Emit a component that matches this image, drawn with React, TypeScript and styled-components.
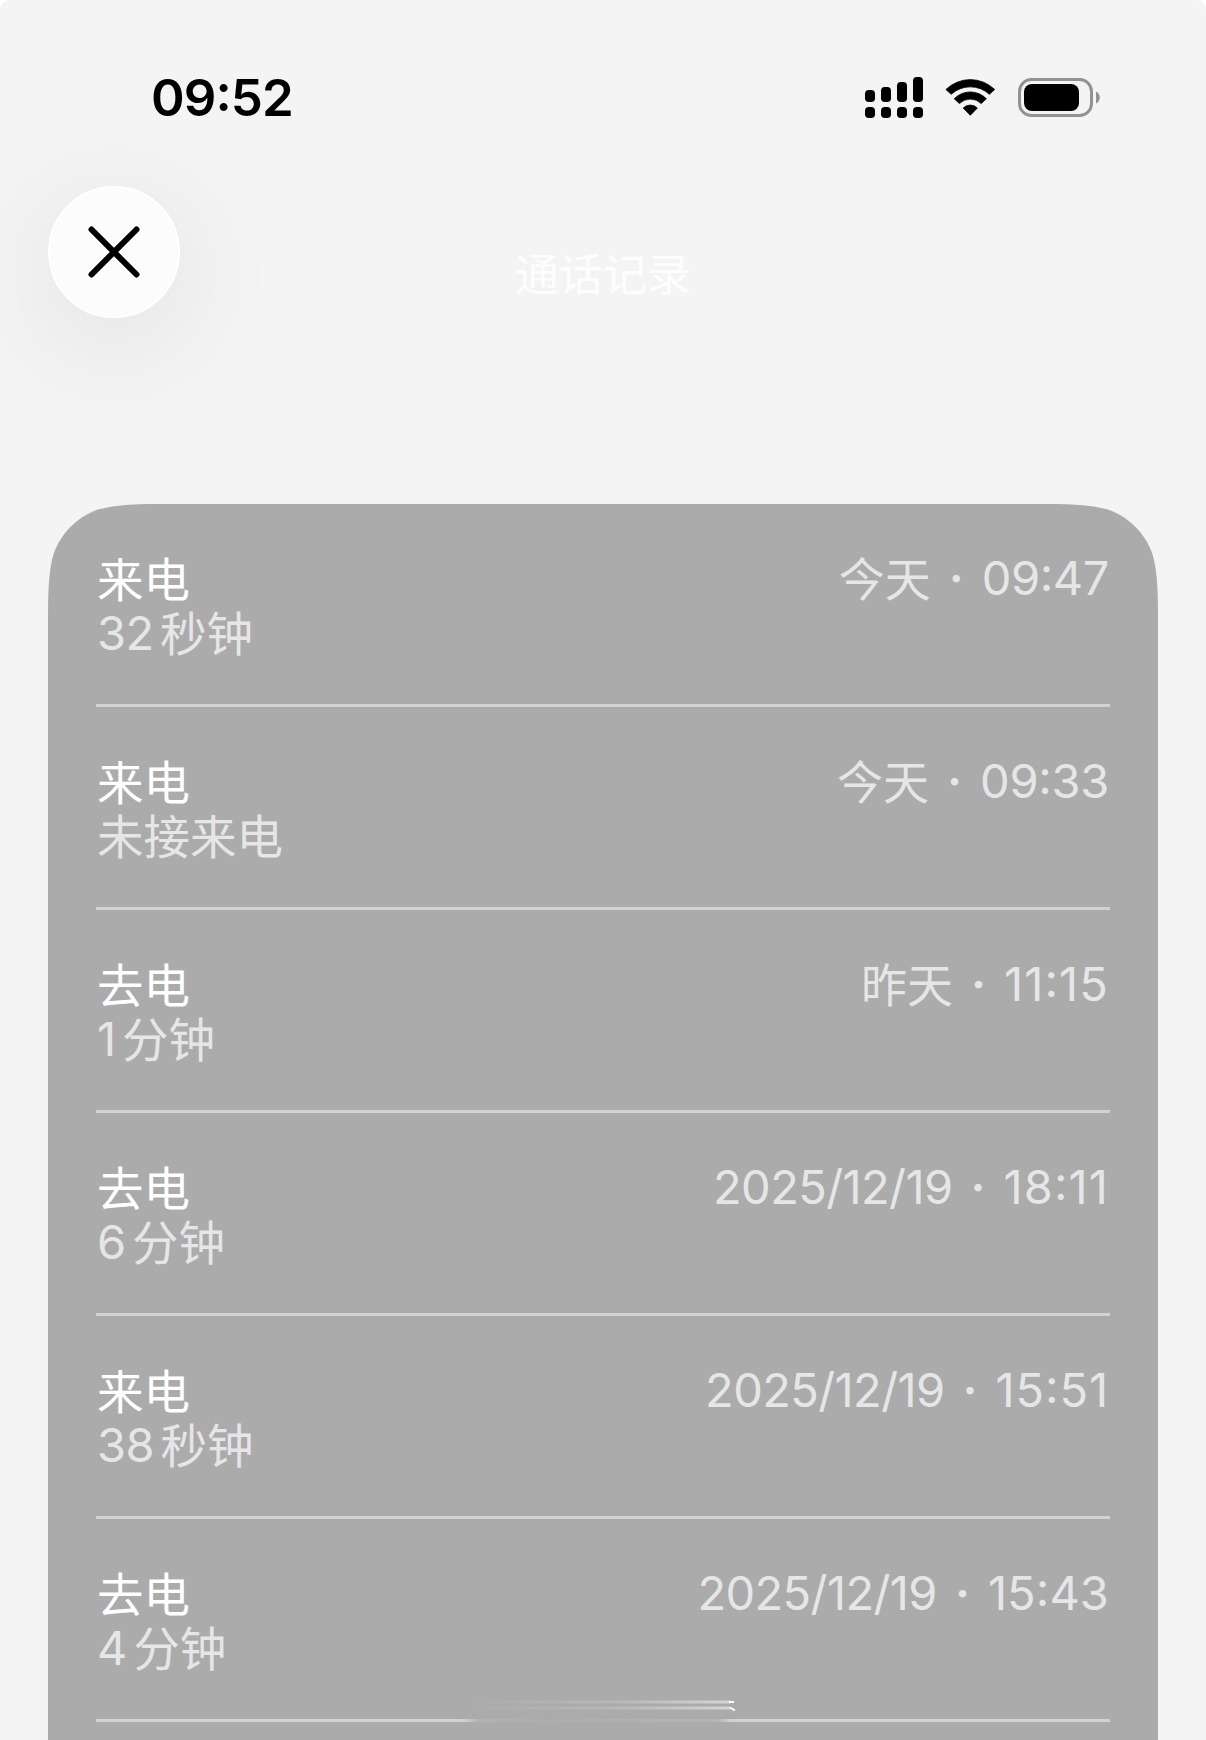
import React from "react";
import styled, { createGlobalStyle } from "styled-components";

const Global = createGlobalStyle`
  * { box-sizing: border-box; }
  html, body { margin: 0; padding: 0; background: #fff; }
  body { font-family: Inter, "Noto Sans CJK SC", sans-serif; -webkit-font-smoothing: antialiased; }
`;

const Screen = styled.main`
  width: 1206px;
  height: 1740px;
  overflow: hidden;
  background: #f4f4f4;
  border-radius: 10px 10px 0 0;
  display: flex;
  flex-direction: column;
`;

const StatusBar = styled.header`
  height: 186px;
  flex: none;
  display: flex;
  align-items: flex-start;
  justify-content: space-between;
  padding: 67px 106px 0 151px;
`;

const Clock = styled.time`
  font-size: 51px;
  line-height: 62px;
  font-weight: 600;
  letter-spacing: -0.9px;
  color: #000;
`;

const Colon = styled.span<{ $raise: number }>`
  line-height: 0;
  vertical-align: ${(p) => p.$raise}px;
`;

const StatusIcons = styled.div`
  display: flex;
  align-items: flex-start;
  gap: 22px;
  padding-top: 10px;
  svg { display: block; }
`;

const NavBar = styled.nav`
  height: 318px;
  flex: none;
  display: grid;
  grid-template-columns: 132px 1fr 132px;
  align-items: start;
  padding: 0 48px;
`;

const CloseButton = styled.button`
  width: 132px;
  height: 132px;
  border: 2px solid #fff;
  border-radius: 50%;
  padding: 0;
  background: #fcfcfc;
  display: flex;
  align-items: center;
  justify-content: center;
  box-shadow: 0 22px 120px rgba(0, 0, 0, 0.09);
`;

const Heading = styled.h1`
  margin: 59px 0 0;
  text-align: center;
  font-size: 44px;
  line-height: 60px;
  font-weight: 400;
  color: #fdfdfd;
`;

const Card = styled.section`
  flex: 1;
  margin: 0 48px;
  background: #ababab;
  clip-path: path("M124 0 H986 C1018 0 1042 0 1060.7 5.8 C1080.9 13.2 1096.8 29.1 1104.2 49.3 C1110 68 1110 92 1110 124 V1300 H0 V124 C0 92 0 68 5.8 49.3 C13.2 29.1 29.1 13.2 49.3 5.8 C68 0 92 0 124 0 Z");
`;

const CallRow = styled.article`
  height: 203px;
  margin: 0 48px;
  padding: 46px 1px 0;
  border-bottom: 3px solid #d2d2d2;
  display: flex;
  justify-content: space-between;
  align-items: flex-start;

  &:last-of-type {
    border-image: linear-gradient(90deg, #d2d2d2 368px, #b2b2b2 384px, #adadad 450px, #b4b4b4 620px, #d2d2d2 634px) 3;
  }
`;

const Info = styled.div`
  display: flex;
  flex-direction: column;
`;

const Kind = styled.span`
  height: 55px;
  padding-top: 3px;
  font-size: 46.5px;
  line-height: 55px;
  color: #fff;
`;

const Duration = styled.span`
  display: flex;
  gap: 6.5px;
  font-size: 47px;
  line-height: 55px;
  color: #e6e6e6;
`;

const When = styled.span`
  display: flex;
  font-size: 47px;
  line-height: 55px;
  color: #e6e6e6;
`;

const Glyphs = styled.span<{ $size?: number }>`
  padding-top: 2px;
  font-size: ${(p) => p.$size ?? 46.5}px;
`;

const Digits = styled.span<{ $track?: number }>`
  letter-spacing: ${(p) => p.$track ?? -0.6}px;
`;

const Dot = styled.span`
  width: 51px;
  text-align: center;
  font-weight: 600;
`;

const HomeIndicator = styled.div`
  position: absolute;
  left: 464px;
  top: 1698px;
  width: 272px;
  height: 16px;
  svg { display: block; }
`;

type Call = {
  kind: string;
  count?: string;
  unit: string;
  day?: string;
  date?: string;
  time: string;
  track: number;
};

const calls: Call[] = [
  { kind: "来电", count: "32", unit: "秒钟", day: "今天", time: "09:47", track: -0.4 },
  { kind: "来电", unit: "未接来电", day: "今天", time: "09:33", track: -0.3 },
  { kind: "去电", count: "1", unit: "分钟", day: "昨天", time: "11:15", track: 1.1 },
  { kind: "去电", count: "6", unit: "分钟", date: "2025/12/19", time: "18:11", track: 1.1 },
  { kind: "来电", count: "38", unit: "秒钟", date: "2025/12/19", time: "15:51", track: 0.9 },
  { kind: "去电", count: "4", unit: "分钟", date: "2025/12/19", time: "15:43", track: 0.1 },
];

const TimeText = ({ value, raise }: { value: string; raise: number }) => {
  const [h, m] = value.split(":");
  return (
    <>
      {h}
      <Colon $raise={raise}>:</Colon>
      {m}
    </>
  );
};

const Signal = () => (
  <svg width="58" height="42" viewBox="0 0 58 42">
    {[0, 16, 32, 48].map((x, i) => (
      <g key={x}>
        <rect x={x} y={[13, 10, 5, 0][i]} width="10" height={[12, 15, 20, 25][i]} rx="3.8" />
        <rect x={x} y="30" width="10" height="11" rx="3.8" />
      </g>
    ))}
  </svg>
);

const Wifi = () => (
  <svg width="51" height="42" viewBox="0 0 51 42" stroke="#000" strokeWidth="0.8" strokeLinejoin="round">
    <path d="M0.9 12.5 A35 35 0 0 1 49.7 12.5 L44.4 17.3 A28.2 28.2 0 0 0 6.2 17.3 Z" />
    <path d="M9.2 21.8 A22.3 22.3 0 0 1 41.4 21.8 L36.2 26.6 A15.4 15.4 0 0 0 14.4 26.6 Z" />
    <path d="M18.2 31 A10 10 0 0 1 32.4 31 L25.3 38.3 Z" />
  </svg>
);

const Battery = () => (
  <svg width="82" height="40" viewBox="0 0 82 40">
    <rect x="1.5" y="2.5" width="72" height="36" rx="12" fill="none" stroke="#929292" strokeWidth="3" />
    <rect x="6" y="7" width="55" height="27" rx="8" />
    <path d="M78 14.5 C83 16.5 83 24.5 78 26.5 Z" fill="#929292" />
  </svg>
);

export default function App() {
  return (
    <>
      <Global />
      <Screen>
        <StatusBar>
          <Clock>
            <TimeText value="09:52" raise={5} />
          </Clock>
          <StatusIcons>
            <Signal />
            <Wifi />
            <Battery />
          </StatusIcons>
        </StatusBar>
        <NavBar>
          <CloseButton aria-label="关闭">
            <svg width="52" height="52" viewBox="0 0 52 52" stroke="#000" strokeWidth="6" strokeLinecap="round">
              <path d="M3.5 3.5 L48.5 48.5 M48.5 3.5 L3.5 48.5" />
            </svg>
          </CloseButton>
          <Heading>通话记录</Heading>
        </NavBar>
        <Card>
          {calls.map((c, i) => (
            <CallRow key={i}>
              <Info>
                <Kind>{c.kind}</Kind>
                <Duration>
                  {c.count && <Digits>{c.count}</Digits>}
                  <Glyphs>{c.unit}</Glyphs>
                </Duration>
              </Info>
              <When>
                {c.day && <Glyphs $size={46}>{c.day}</Glyphs>}
                {c.date && <Digits>{c.date}</Digits>}
                <Dot>·</Dot>
                <Digits $track={c.track}>
                  <TimeText value={c.time} raise={4} />
                </Digits>
              </When>
            </CallRow>
          ))}
        </Card>
        <HomeIndicator>
          <svg width="272" height="16" viewBox="0 0 272 16">
            <defs>
              <linearGradient id="glow" x1="0" x2="1">
                <stop offset="0" stopColor="#fff" stopOpacity="0" />
                <stop offset="0.6" stopColor="#fff" stopOpacity="0.16" />
                <stop offset="1" stopColor="#fff" stopOpacity="0.5" />
              </linearGradient>
            </defs>
            <rect x="0" y="2.5" width="266" height="3" fill="url(#glow)" />
            <rect x="0" y="8.5" width="266" height="3" fill="url(#glow)" />
            <path d="M265 4 H270 M266 9.5 L271 12.5" stroke="#fff" strokeWidth="2" />
          </svg>
        </HomeIndicator>
      </Screen>
    </>
  );
}
